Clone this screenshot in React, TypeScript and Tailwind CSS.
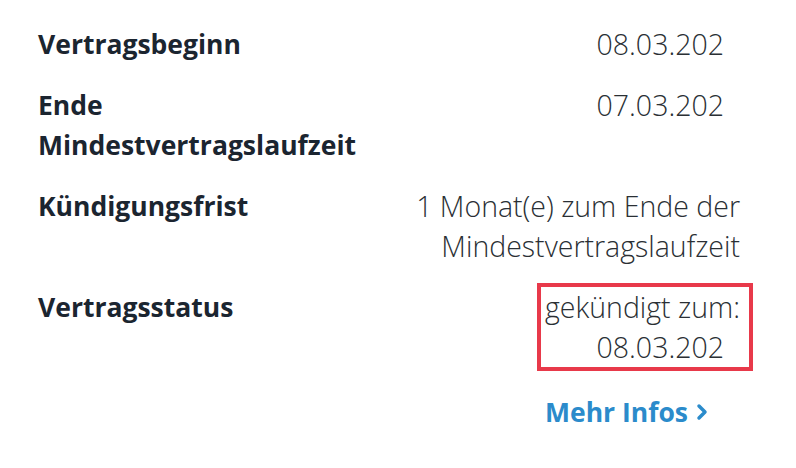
import { ChevronRight } from "lucide-react";

type Row = { label: string; value: React.ReactNode };

function Label({ children }: { children: React.ReactNode }) {
  return (
    <div className="w-[340px] shrink-0 text-[26.5px] font-bold leading-[40px] text-[#1b2530]">
      {children}
    </div>
  );
}

export default function App() {
  const rows: Row[] = [
    { label: "Vertragsbeginn", value: <span className="pr-[16px]">08.03.202</span> },
    { label: "Ende Mindestvertragslaufzeit", value: <span className="pr-[16px]">07.03.202</span> },
    {
      label: "Kündigungsfrist",
      value: (
        <span>
          1 Monat(e) zum Ende der
          <br />
          Mindestvertragslaufzeit
        </span>
      ),
    },
  ];

  return (
    <div
      className="min-h-[468px] w-[796px] bg-white pl-[38px] pr-[56px] pt-[24px]"
      style={{ fontFamily: '"Open Sans", "Noto Sans", sans-serif' }}
    >
      <div className="flex flex-col gap-[21px]">
        {rows.map((r) => (
          <div key={r.label} className="flex">
            <Label>{r.label}</Label>
            <div className="flex-1 text-right text-[28.5px] font-light leading-[40px] text-[#2a2f34]">
              {r.value}
            </div>
          </div>
        ))}

        <div className="flex">
          <Label>Vertragsstatus</Label>
          <div className="flex flex-1 flex-col items-end">
            <div className="-mr-[13px] -mt-[4px] border-4 border-[#e8394a] pl-[4px] pr-[9px] text-right text-[28.5px] font-light leading-[40px] text-[#2a2f34]">
              gekündigt zum:
              <br />
              <span className="pr-[16px]">08.03.202</span>
            </div>
            <a
              href="#"
              className="mr-[26px] mt-[21px] flex items-center text-[26.5px] font-bold leading-[40px] text-[#2b8bcb]"
            >
              Mehr Infos
              <ChevronRight className="ml-[2px] h-[24px] w-[24px]" strokeWidth={3.5} />
            </a>
          </div>
        </div>
      </div>
    </div>
  );
}
